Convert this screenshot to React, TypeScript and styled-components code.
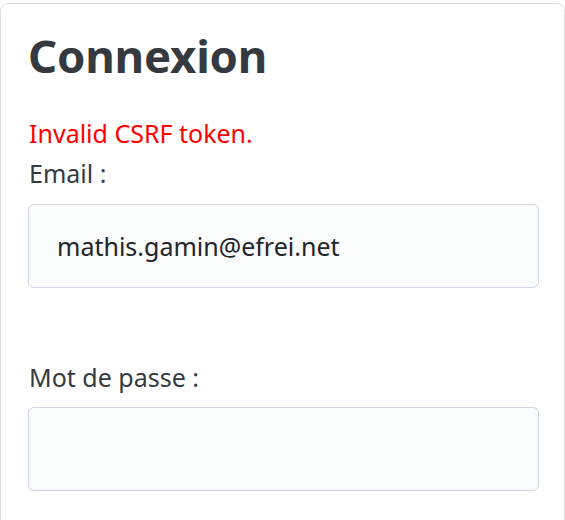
import React from "react";
import styled, { createGlobalStyle } from "styled-components";

const Global = createGlobalStyle`
  html, body { margin: 0; padding: 0; background: #ffffff; }
  body { font-family: "Noto Sans", "Open Sans", sans-serif; }
`;

const Page = styled.div`
  padding-top: 3px;
  width: 565px;
`;

const Card = styled.section`
  box-sizing: border-box;
  width: 565px;
  height: 540px;
  border: 1px solid #dcdcdc;
  border-radius: 8px;
  padding: 25px 25px 0 27px;
  display: flex;
  flex-direction: column;
`;

const Title = styled.h1`
  margin: 0;
  font-size: 45.5px;
  line-height: 52px;
  font-weight: 700;
  color: #343a40;
  letter-spacing: -0.2px;
`;

const ErrorText = styled.p`
  margin: 37px 0 0 1px;
  font-size: 25px;
  line-height: 30px;
  color: #ff0000;
`;

const Label = styled.label<{ $gap: number }>`
  display: block;
  margin: ${(p) => p.$gap}px 0 0 1px;
  font-size: 25px;
  line-height: 30px;
  color: #343a40;
`;

const Input = styled.input<{ $top: number }>`
  box-sizing: border-box;
  display: block;
  width: 100%;
  height: 84px;
  margin-top: ${(p) => p.$top}px;
  padding: 0 28px;
  border: 1px solid #d0d5e3;
  border-radius: 6px;
  background: #f9fafa;
  font-family: "Noto Sans", "Open Sans", sans-serif;
  font-size: 25px;
  color: #212529;
  outline: none;
`;

export default function App() {
  return (
    <Page>
      <Global />
      <Card>
        <Title>Connexion</Title>
        <ErrorText>Invalid CSRF token.</ErrorText>
        <Label $gap={10} htmlFor="email">Email :</Label>
        <Input $top={16} id="email" type="email" defaultValue="mathis.gamin@efrei.net" />
        <Label $gap={74} htmlFor="pwd">Mot de passe :</Label>
        <Input $top={15} id="pwd" type="password" />
      </Card>
    </Page>
  );
}
